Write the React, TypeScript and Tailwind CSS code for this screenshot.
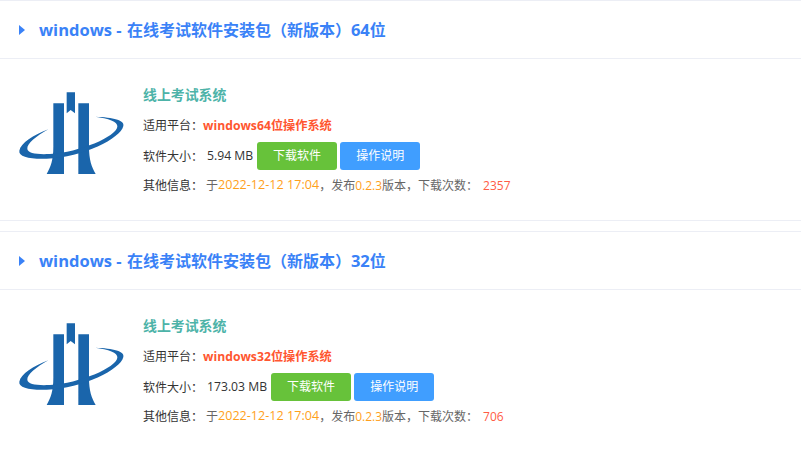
import React from 'react';

const packages = [
  { bits: '64', size: '5.94 MB', count: '2357' },
  { bits: '32', size: '173.03 MB', count: '706' },
];

function Logo() {
  return (
    <svg viewBox="0 0 420 330" width="140" height="110" className="shrink-0" fill="#1a65ab">
      <path d="M160 70H192V282H140C152 260 160 240 160 200Z" />
      <path d="M235 70H267V200C267 240 275 260 287 282H235Z" />
      <path d="M200 37H225V100L212 90L200 100Z" />
      <path d="M285 110C340 112 375 120 370 138C362 175 250 232 140 236C90 238 55 230 58 212C62 190 100 165 145 148C110 168 80 190 82 207C84 220 110 224 150 222C240 216 348 170 352 140C354 125 325 115 285 110Z" />
    </svg>
  );
}

function PackageCard({ bits, size, count }: { bits: string; size: string; count: string }) {
  return (
    <section className="border-y border-[#eceef5] bg-white mb-[10px]">
      <h2 className="h-[57px] flex items-center pl-[19px] pt-[1px] text-[16px] font-bold text-[#3a82f7]">
        <span className="w-0 h-0 mr-[14px] border-y-[5px] border-y-transparent border-l-[6px] border-l-[#3a82f7]" />
        <span className="text-[16.5px] mr-[1px]">windows -&nbsp;</span>
        在线考试软件安装包（新版本）
        <span className="text-[16.5px]">{bits}</span>位
      </h2>
      <div className="border-t border-[#eceef5] h-[162px] flex pt-[21px]">
        <Logo />
        <div className="ml-[3px] text-[12px] text-[#333]">
          <div className="h-[30px] flex items-center text-[13.9px] font-bold text-[#4db3a8]">线上考试系统</div>
          <div className="h-[31px] flex items-center pt-[1px]">
            适用平台：<span className="font-bold text-[12.2px] text-[#ff5630]">windows{bits}位操作系统</span>
          </div>
          <div className="h-[30px] flex items-center">
            <span className="w-[64px] pt-[1px]">软件大小：</span>
            <span className="mr-[4px] pt-[1px] text-[12.2px]">{size}</span>
            <button className="w-[80px] h-[28px] rounded-[3px] bg-[#67c23a] text-white mr-[3.2px]">下载软件</button>
            <button className="w-[80px] h-[28px] rounded-[3px] bg-[#409eff] text-white">操作说明</button>
          </div>
          <div className="h-[29px] flex items-center whitespace-pre text-[#666]">
            <span className="w-[63px] text-[#333]">其他信息：</span>
            于<span className="text-[12.6px] text-[#ff9f1c]">2022-12-12 17:04</span>，发布<span className="text-[#ff9f1c]">0.2.3</span>版本，下载次数：
            <span className="ml-[5px] text-[#ff5c45]">{count}</span>
          </div>
        </div>
      </div>
    </section>
  );
}

export default function App() {
  return (
    <div className="h-[451px] overflow-hidden bg-white font-['Open_Sans','Noto_Sans_CJK_SC',sans-serif]">
      {packages.map((p) => (
        <PackageCard key={p.bits} {...p} />
      ))}
    </div>
  );
}
